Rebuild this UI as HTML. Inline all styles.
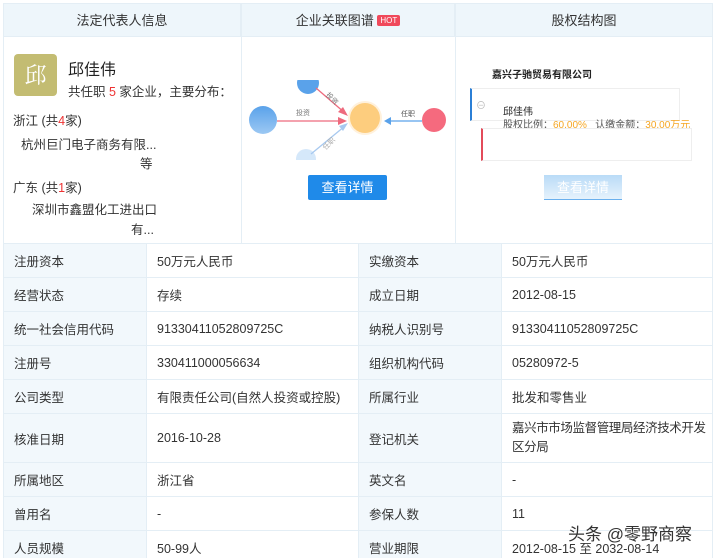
<!DOCTYPE html>
<html><head><meta charset="utf-8"><style>
*{margin:0;padding:0;box-sizing:border-box}
html,body{width:716px;height:558px;overflow:hidden}
body{background:#fff;font-family:"Liberation Sans","Noto Sans CJK SC",sans-serif;font-size:12px;color:#333;position:relative}
.a{position:absolute}
.hd{position:absolute;top:3px;height:34px;background:#eef6fb;border:1px solid #e4eef5;text-align:center;line-height:33px;font-size:13px;color:#333}
.vl{position:absolute;width:1px;background:#e4eef5}
table{position:absolute;left:3px;top:243px;width:710px;border-collapse:collapse}
td{border:1px solid #e4eef5;padding:0 10px;font-size:12.5px;color:#333;height:34px}
td.l{background:#f2f8fc;width:143px}
</style></head><body>
<div class="hd" style="left:3px;width:238px">法定代表人信息</div>
<div class="hd" style="left:241px;width:214px">企业关联图谱 <span style="background:#f0495b;color:#fff;font-size:8px;padding:1px 3px;border-radius:2px;vertical-align:2px">HOT</span></div>
<div class="hd" style="left:455px;width:258px">股权结构图</div>
<div class="vl" style="left:3px;top:37px;height:206px"></div>
<div class="vl" style="left:241px;top:37px;height:206px"></div>
<div class="vl" style="left:455px;top:37px;height:206px"></div>
<div class="vl" style="left:712px;top:37px;height:206px"></div>

<div class="a" style="left:14px;top:54px;width:43px;height:42px;background:#c3bc72;border-radius:4px;color:#fff;font-size:22px;text-align:center;line-height:42px;font-family:'Noto Serif CJK SC',serif">邱</div>
<div class="a" style="left:68px;top:56px;font-size:16px;color:#222">邱佳伟</div>
<div class="a" style="left:68px;top:81px;font-size:12.5px">共任职 <span style="color:#e33">5</span> 家企业，主要分布：</div>
<div class="a" style="left:13px;top:110px;font-size:12.5px">浙江 (共<span style="color:#e33">4</span>家)</div>
<div class="a" style="left:21px;top:134px;font-size:12.5px">杭州巨门电子商务有限...</div>
<div class="a" style="left:140px;top:153px;font-size:12.5px">等</div>
<div class="a" style="left:13px;top:177px;font-size:12.5px">广东 (共<span style="color:#e33">1</span>家)</div>
<div class="a" style="left:32px;top:199px;font-size:12.5px">深圳市鑫盟化工进出口</div>
<div class="a" style="left:131px;top:219px;font-size:12.5px">有...</div>

<svg class="a" style="left:241px;top:80px" width="214" height="80">
<defs><linearGradient id="b" x1="0" y1="0" x2="0" y2="1"><stop offset="0" stop-color="#5aa2ea"/><stop offset="1" stop-color="#9cc8f3"/></linearGradient></defs>
<circle cx="67" cy="3" r="11" fill="#5aa2ea"/>
<circle cx="22" cy="40" r="14" fill="url(#b)"/>
<circle cx="65" cy="79" r="10" fill="#d5e8fa"/>
<circle cx="124" cy="38" r="17" fill="#fff1dc"/>
<circle cx="124" cy="38" r="15" fill="#fdcd7e"/>
<circle cx="193" cy="40" r="12" fill="#f56a7e"/>
<line x1="36" y1="41" x2="103" y2="41" stroke="#ee6a7d" stroke-width="1.3"/>
<polygon points="106,41 97,37 97,45" fill="#ee6a7d"/>
<line x1="75" y1="8" x2="104" y2="33" stroke="#ee6a7d" stroke-width="1.3"/>
<polygon points="107,36 97,32 102,27" fill="#ee6a7d"/>
<line x1="70" y1="74" x2="104" y2="46" stroke="#a7c9f0" stroke-width="1.3"/>
<polygon points="107,43 102,51 98,46" fill="#a7c9f0"/>
<line x1="181" y1="41" x2="146" y2="41" stroke="#5aa2ea" stroke-width="1.3"/>
<polygon points="143,41 150,37 150,45" fill="#5aa2ea"/>
<text x="55" y="35" font-size="7" fill="#777">投资</text>
<text x="160" y="36" font-size="7" fill="#555">任职</text>
<text x="85" y="18" font-size="7" fill="#777" transform="rotate(45 88 16)">投资</text>
<text x="82" y="68" font-size="7" fill="#aaa" transform="rotate(-45 86 66)">任职</text>
</svg>
<div class="a" style="left:308px;top:175px;width:79px;height:25px;background:#1f8ae9;color:#fff;font-size:13px;text-align:center;line-height:25px;border-radius:2px">查看详情</div>

<div class="a" style="left:492px;top:66px;font-size:10px;font-weight:bold;color:#222">嘉兴子驰贸易有限公司</div>
<div class="a" style="left:470px;top:88px;width:210px;height:33px;border:1px solid #eee;border-left:2px solid #2b7fd6"></div>
<div class="a" style="left:476px;top:97px;font-size:10px;color:#bbb">⊖</div>
<div class="a" style="left:503px;top:103px;font-size:10px;color:#222">邱佳伟</div>
<div class="a" style="left:503px;top:116px;font-size:10px;color:#555;white-space:nowrap">股权比例：<span style="color:#f5a623">60.00%</span>&nbsp;&nbsp;&nbsp;认缴金额：<span style="color:#f5a623">30.00万元</span></div>
<div class="a" style="left:481px;top:128px;width:211px;height:33px;border:1px solid #eee;border-left:2px solid #e34b5a"></div>
<div class="a" style="left:544px;top:175px;width:78px;height:25px;background:linear-gradient(#b9dbf7,#e6f2fc);color:#fff;font-size:13px;text-align:center;line-height:25px;border-bottom:1px solid #6ab0ee">查看详情</div>

<table>
<tr><td class="l">注册资本</td><td style="width:212px">50万元人民币</td><td class="l">实缴资本</td><td>50万元人民币</td></tr>
<tr><td class="l">经营状态</td><td>存续</td><td class="l">成立日期</td><td>2012-08-15</td></tr>
<tr><td class="l">统一社会信用代码</td><td>91330411052809725C</td><td class="l">纳税人识别号</td><td>91330411052809725C</td></tr>
<tr><td class="l">注册号</td><td>330411000056634</td><td class="l">组织机构代码</td><td>05280972-5</td></tr>
<tr><td class="l">公司类型</td><td>有限责任公司(自然人投资或控股)</td><td class="l">所属行业</td><td>批发和零售业</td></tr>
<tr><td class="l" style="height:49px">核准日期</td><td>2016-10-28</td><td class="l">登记机关</td><td style="line-height:19px;padding-right:2px;letter-spacing:-0.4px">嘉兴市市场监督管理局经济技术开发区分局</td></tr>
<tr><td class="l">所属地区</td><td>浙江省</td><td class="l">英文名</td><td>-</td></tr>
<tr><td class="l">曾用名</td><td>-</td><td class="l">参保人数</td><td>11</td></tr>
<tr><td class="l">人员规模</td><td>50-99人</td><td class="l">营业期限</td><td>2012-08-15 至 2032-08-14</td></tr>
</table>
<div class="a" style="left:568px;top:520px;font-size:17px;color:#333;text-shadow:0 0 2px #fff,0 0 2px #fff">头条 @零野商察</div>
</body></html>
